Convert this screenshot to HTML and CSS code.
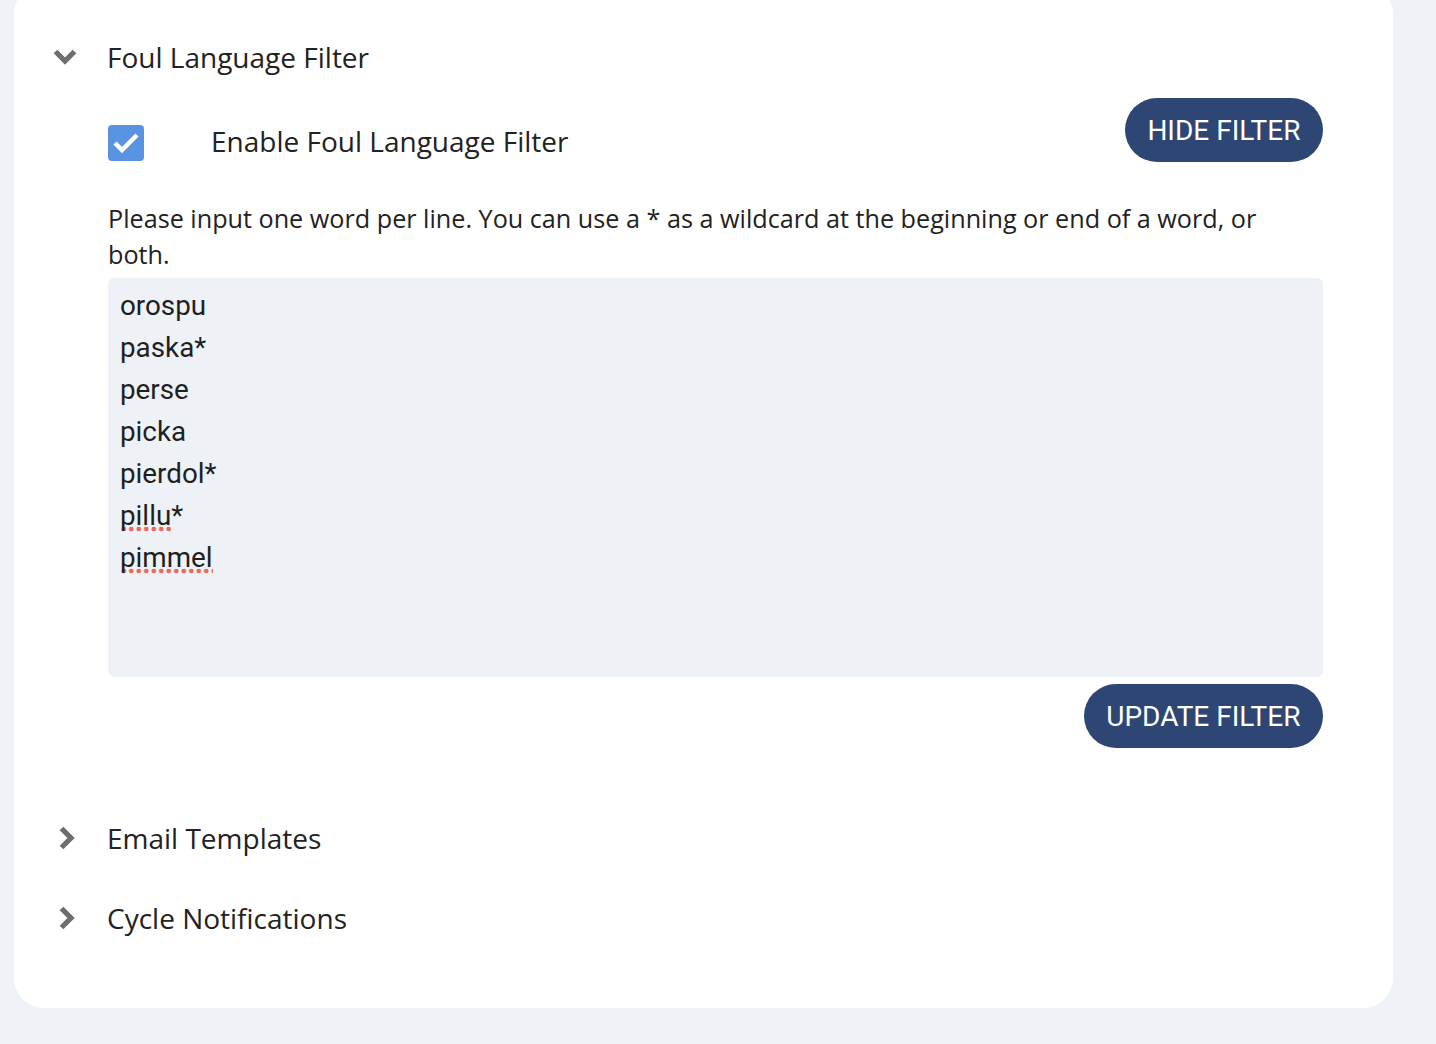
FILE: index.html
```html
<!DOCTYPE html>
<html>

<head>
    <title>Settings</title>
    <link rel="stylesheet" href="styles.css">
</head>

<body>
    <div class="card">
        <div class="section open">
            <div class="section-header">
                <span class="chevron">
                    <svg width="24" height="16" viewBox="0 0 24 16"><polyline points="2.5,2.5 12,12 21.5,2.5" fill="none" stroke="#6e6e6e" stroke-width="5.2"/></svg>
                </span>
                <span class="section-title">Foul Language Filter</span>
            </div>
            <div class="section-body">
                <div class="toggle-row">
                    <label class="enable">
                        <span class="checkbox">
                            <svg width="36" height="36" viewBox="0 0 36 36"><polyline points="7,18 14,25 29,10" fill="none" stroke="#ffffff" stroke-width="4.5"/></svg>
                        </span>
                        <span class="enable-text">Enable Foul Language Filter</span>
                    </label>
                    <button class="pill">HIDE FILTER</button>
                </div>
                <p class="hint">Please input one word per line. You can use a * as a wildcard at the beginning or end of a word, or both.</p>
                <div class="word-list">
                    <div>orospu</div>
                    <div>paska*</div>
                    <div>perse</div>
                    <div>picka</div>
                    <div>pierdol*</div>
                    <div><span class="typo">pillu</span>*</div>
                    <div><span class="typo">pimmel</span></div>
                </div>
                <div class="actions">
                    <button class="pill">UPDATE FILTER</button>
                </div>
            </div>
        </div>
        <div class="section">
            <div class="section-header">
                <span class="chevron">
                    <svg width="24" height="24" viewBox="0 0 24 24"><polyline points="8.5,2.5 18,12 8.5,21.5" fill="none" stroke="#6e6e6e" stroke-width="5.2"/></svg>
                </span>
                <span class="section-title">Email Templates</span>
            </div>
        </div>
        <div class="section">
            <div class="section-header">
                <span class="chevron">
                    <svg width="24" height="24" viewBox="0 0 24 24"><polyline points="8.5,2.5 18,12 8.5,21.5" fill="none" stroke="#6e6e6e" stroke-width="5.2"/></svg>
                </span>
                <span class="section-title">Cycle Notifications</span>
            </div>
        </div>
    </div>
</body>

</html>
```

FILE: styles.css
```css
body {
    margin: 0;
    background: #eff2f6;
    font-family: "Open Sans", sans-serif;
    color: #222222;
    height: 1044px;
    overflow: hidden;
}

.card {
    background: #ffffff;
    width: 1379px;
    margin: -16px 0 0 14px;
    padding: 45px 70px 62px 39px;
    box-sizing: border-box;
    border-radius: 30px;
}

.section + .section {
    margin-top: 24px;
}

.section.open + .section {
    margin-top: 62px;
}

.section-header {
    display: flex;
    align-items: center;
    height: 56px;
}

.chevron {
    width: 54px;
    display: flex;
    align-items: center;
}

.section-title {
    font-size: 28px;
}

.section-body {
    padding-left: 55px;
}

.toggle-row {
    display: flex;
    justify-content: space-between;
    align-items: flex-start;
    margin-top: 13px;
}

.enable {
    display: flex;
    align-items: center;
    gap: 67px;
    margin-top: 26px;
    font-size: 28px;
    line-height: 34px;
}

.enable-text {
    padding-bottom: 3px;
}

.checkbox {
    width: 36px;
    height: 36px;
    border-radius: 4px;
    background: #5b93e3;
    display: flex;
}

.pill {
    background: #2d4673;
    color: #ffffff;
    border: none;
    border-radius: 32px;
    height: 64px;
    padding: 0 22.5px;
    font-family: Roboto, sans-serif;
    font-size: 28px;
    cursor: pointer;
}

.hint {
    margin: 38px 0 0;
    font-size: 25.2px;
    line-height: 36px;
}

.word-list {
    margin-top: 6px;
    height: 399px;
    box-sizing: border-box;
    padding: 7px 12px 8px;
    background: #eef2f6;
    border-radius: 6px;
    font-family: Roboto, sans-serif;
    font-size: 27.8px;
    line-height: 42px;
    color: #1f1f1f;
    overflow: hidden;
}

.typo {
    background: radial-gradient(circle, #e8695e 2.1px, transparent 2.6px) repeat-x left bottom;
    background-size: 7.5px 6px;
}

.actions {
    display: flex;
    justify-content: flex-end;
    margin-top: 7px;
}
```
